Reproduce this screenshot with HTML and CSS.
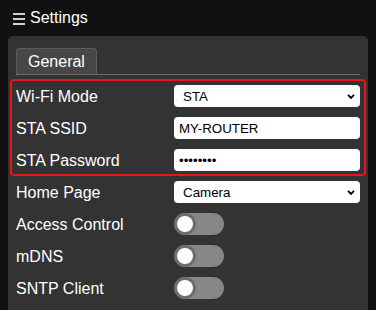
FILE: index.html
```html
<!DOCTYPE html>
<html lang="en">
<head>
<meta charset="utf-8">
<title>Settings</title>
<link rel="stylesheet" href="styles.css">
</head>
<body>
<header class="topbar">
  <svg class="menu-icon" width="12" height="12" viewBox="0 0 12 12" aria-hidden="true">
    <rect x="0" y="0.2" width="12" height="1.6" fill="#fff"/>
    <rect x="0" y="5.2" width="12" height="1.6" fill="#fff"/>
    <rect x="0" y="10.2" width="12" height="1.6" fill="#fff"/>
  </svg>
  <span class="title">Settings</span>
</header>
<main class="panel">
  <div class="tabs">
    <div class="tab">General</div>
  </div>
  <div class="rows">
    <div class="group">
      <div class="row">
        <label class="label">Wi-Fi Mode</label>
        <div class="select-wrap">
          <select class="field select"><option>STA</option><option>AP</option></select>
          <svg class="chevron" width="8" height="5" viewBox="0 0 8 5" aria-hidden="true"><path d="M1 0.9 L4 3.9 L7 0.9" fill="none" stroke="#000" stroke-width="1.9"/></svg>
        </div>
      </div>
      <div class="row">
        <label class="label">STA SSID</label>
        <input class="field" type="text" value="MY-ROUTER">
      </div>
      <div class="row">
        <label class="label">STA Password</label>
        <input class="field" type="password" value="12345678">
      </div>
    </div>
    <div class="row">
      <label class="label">Home Page</label>
      <div class="select-wrap">
        <select class="field select"><option>Camera</option></select>
        <svg class="chevron" width="8" height="5" viewBox="0 0 8 5" aria-hidden="true"><path d="M1 0.9 L4 3.9 L7 0.9" fill="none" stroke="#000" stroke-width="1.9"/></svg>
      </div>
    </div>
    <div class="row">
      <label class="label">Access Control</label>
      <span class="toggle"><span class="knob"></span></span>
    </div>
    <div class="row">
      <label class="label">mDNS</label>
      <span class="toggle"><span class="knob"></span></span>
    </div>
    <div class="row">
      <label class="label">SNTP Client</label>
      <span class="toggle"><span class="knob"></span></span>
    </div>
  </div>
</main>
</body>
</html>
```

FILE: styles.css
```css
html, body {
  margin: 0;
  padding: 0;
  background: #111111;
  font-family: "Liberation Sans", Arial, sans-serif;
  color: #ffffff;
  overflow: hidden;
}

.topbar {
  height: 36px;
  display: flex;
  align-items: center;
  padding-left: 13px;
  gap: 5px;
  font-size: 16px;
}

.menu-icon {
  display: block;
  margin-top: 1px;
}

.title {
  line-height: 18px;
}

.panel {
  margin: 0 8px;
  background: #333333;
  border-radius: 5px 5px 0 0;
  padding: 12px 8px 0;
  height: calc(100vh - 36px);
  box-sizing: border-box;
}

.tabs {
  display: flex;
  border-bottom: 1px solid #6a6a6a;
}

.tab {
  font-size: 16px;
  line-height: 18px;
  padding: 4px 11px 3px;
  background: #474747;
  border: 1px solid #5c5c5c;
  border-bottom: none;
  border-radius: 4px 4px 0 0;
}

.rows {
  margin-top: 5px;
}

.group {
  position: relative;
}

.group::after {
  content: "";
  position: absolute;
  top: -1px;
  left: -6px;
  right: -6px;
  bottom: 0;
  border: 2px solid #e8141c;
  border-radius: 4px;
  pointer-events: none;
}

.row {
  display: grid;
  grid-template-columns: 158px 1fr;
  align-items: center;
  height: 32px;
}

.label {
  font-size: 16px;
  line-height: 18px;
  padding-top: 2px;
}

.field {
  display: block;
  box-sizing: border-box;
  width: 100%;
  height: 22px;
  border: none;
  border-radius: 4px;
  background: #ffffff;
  color: #000000;
  font-family: "Liberation Sans", Arial, sans-serif;
  font-size: 13.33px;
  padding: 0 5px;
  margin: 0;
  outline: none;
}

.select-wrap {
  position: relative;
}

.select {
  -webkit-appearance: none;
  appearance: none;
  padding: 0 9px;
}

.chevron {
  position: absolute;
  right: 5px;
  top: 9px;
  pointer-events: none;
}

.toggle {
  display: block;
  position: relative;
  width: 50px;
  height: 22px;
  border-radius: 11px;
  background: #878787;
  overflow: hidden;
}

.knob {
  position: absolute;
  left: 3px;
  top: 3px;
  width: 16px;
  height: 16px;
  border-radius: 50%;
  background: #ffffff;
  box-shadow: 0 0 0 3px #6c6c6c;
}
```
